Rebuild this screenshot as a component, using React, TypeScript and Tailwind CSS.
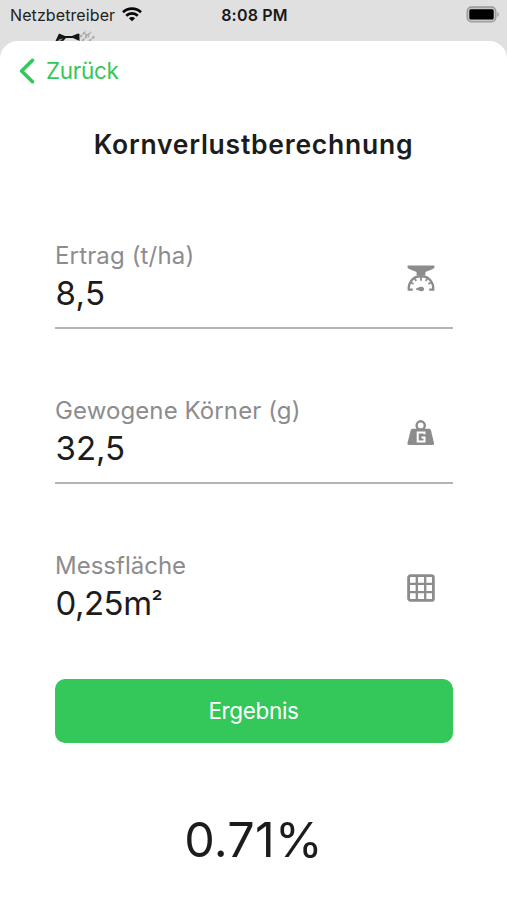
import type { ReactNode } from 'react';

interface FieldProps {
  label: string;
  value: ReactNode;
  icon: ReactNode;
  labelClass: string;
  valueClass: string;
  underline?: boolean;
}

const WifiIcon = () => (
  <svg width="20" height="15" viewBox="0 0 20 15" fill="none" stroke="#080808" strokeWidth="2.7">
    <path d="M1 5.2C6 .5 14 .5 19 5.2" />
    <path d="M4.2 8.7c3.3-3.1 8.3-3.1 11.6 0" />
    <path d="M10 14.3 6.9 11.3c1.8-1.6 4.4-1.6 6.2 0z" fill="#080808" stroke="none" />
  </svg>
);

const BatteryIcon = () => (
  <svg width="34" height="17" viewBox="0 0 34 17">
    <rect x="1.2" y="1" width="28.6" height="14.8" rx="4.4" fill="#c6c6c6" stroke="#969696" strokeWidth="1.3" />
    <rect x="3.3" y="3.2" width="24.4" height="10.2" rx="1.5" fill="#000" />
    <path d="M31.3 6v4.8c2-.7 2-4.1 0-4.8z" fill="#a0a0a0" />
  </svg>
);

const ScaleIcon = () => (
  <svg width="28" height="27" viewBox="0 0 28 27" fill="#8c8c8e">
    <path d="M1.5.5h25c.8 0 1 .4 1 1 0 1.4-.6 2-1.6 2.4L18.4 7v3.4H9.6V7L2.1 3.9C1.1 3.5.5 2.9.5 1.5c0-.6.2-1 1-1z" />
    <path d="M5.8 24.6H1.8C1.3 16.7 6.5 11.3 14 11.3s12.7 5.4 12.2 13.3h-4" fill="none" stroke="#8c8c8e" strokeWidth="2.4" />
    <path d="M14 11v4.8M7.3 12.6l1.9 3.4M20.7 12.6l-1.9 3.4M3.6 17.2l3 1.8M24.4 17.2l-3 1.8" fill="none" stroke="#8c8c8e" strokeWidth="1.8" />
    <path d="M9 23.6l3.7-1.7c3-.7 4.3.4 4.3 2s-1.2 2.8-3.8 2l-4.2-1.3z" />
  </svg>
);

const WeightIcon = () => (
  <svg width="28" height="26" viewBox="0 0 28 26" fill="#8c8c8e">
    <circle cx="13.7" cy="5.4" r="4.1" fill="none" stroke="#8c8c8e" strokeWidth="2.4" />
    <path d="M5.7 8.7h16.1c1.2 0 1.9.7 2.2 1.7L27 23c.3 1.3-.3 2-1.5 2H2.1C.8 25 .2 24.3.5 23l3.1-12.6c.3-1 1-1.7 2.1-1.7z" />
    <path d="M17.5 14.3v-1.7h-6.8v9h6.8v-4h-3" fill="none" stroke="#fff" strokeWidth="2" />
  </svg>
);

const GridIcon = () => (
  <svg width="28" height="28" viewBox="0 0 28 28" fill="none" stroke="#8c8c8e" strokeWidth="2.8">
    <rect x="1.6" y="1.6" width="24.8" height="24.8" rx="2" />
    <path d="M9.8 1v26M18.2 1v26M1 9.8h26M1 18.2h26" strokeWidth="2.3" />
  </svg>
);

const Field = ({ label, value, icon, labelClass, valueClass, underline }: FieldProps) => (
  <div
    className={`flex h-[89px] items-start justify-between pr-[18px] ${
      underline ? 'border-b-2 border-[#b4b4b6]' : ''
    }`}
  >
    <div className="pt-px">
      <div className={`h-[29px] whitespace-nowrap pl-[0.5px] text-[24px] leading-[30px] text-[#8c8c8e] ${labelClass}`}>{label}</div>
      <div className={`h-[46px] whitespace-nowrap pl-px text-[33px] leading-[46px] text-[#1c1c1c] ${valueClass}`}>{value}</div>
    </div>
    <div className="flex h-[76px] items-center">{icon}</div>
  </div>
);

const App = () => {
  return (
    <div className="flex h-[900px] w-[507px] flex-col overflow-hidden bg-[#e0e0e0] font-['Inter',sans-serif]">
      {/* Status bar */}
      <div className="grid h-[29px] shrink-0 grid-cols-3 items-center pl-[10px] pr-[7px]">
        <div className="flex items-center gap-[7px]">
          <span className="whitespace-nowrap pt-px text-[16px] tracking-[0.1px] text-[#222]">Netzbetreiber</span>
          <WifiIcon />
        </div>
        <span className="pr-px pt-px text-center text-[16px] font-semibold tracking-[0.2px] text-[#181818]">8:08 PM</span>
        <div className="flex justify-end">
          <BatteryIcon />
        </div>
      </div>

      {/* Edge of the screen behind the sheet */}
      <div className="h-3 shrink-0 pl-[54px]">
        <svg width="44" height="12" viewBox="0 0 44 12">
          <path d="M1.500 12 5 4.500l6 2.500h7l6-2.500 1.500.5v7L19 9h-7l-3 3z" fill="#151515" />
          <path d="M5.500 10l3.500-.5-2.500 2.500h-3z" fill="#8a8a8a" />
          <path d="M26 8l6-6M28 12l9-9M35 12l6-5M31 5l4 3" stroke="#a8a8a8" strokeWidth="1.8" strokeDasharray="3 1" fill="none" />
        </svg>
      </div>

      {/* Sheet */}
      <div className="flex-1 rounded-t-[18px] bg-white">
        <div className="flex h-[60px] items-center gap-[11px] pl-[19px] text-[#34c759]">
          <svg width="16" height="26" viewBox="0 0 16 26" fill="none" stroke="currentColor" strokeWidth="3.6" strokeLinecap="round" strokeLinejoin="round">
            <path d="M13.5 2.3 2.6 13l10.9 10.7" />
          </svg>
          <span className="text-[22.5px] tracking-[-0.3px]">Zurück</span>
        </div>

        <h1 className="mt-[23px] h-10 text-center text-[26.5px] font-semibold leading-10 tracking-[0.75px] text-[#1c1c1c]">
          Kornverlustberechnung
        </h1>

        <div className="mt-[76px] flex flex-col gap-[66px] px-[54.5px]">
          <Field label="Ertrag (t/ha)" value="8,5" icon={<ScaleIcon />} labelClass="tracking-[0.15px]" valueClass="tracking-[0.4px]" underline />
          <Field label="Gewogene Körner (g)" value="32,5" icon={<WeightIcon />} labelClass="tracking-[0.1px]" valueClass="tracking-[0px]" underline />
          <Field
            label="Messfläche"
            value={<>0,25m<span className="align-[4px] text-[25px] leading-none">²</span></>}
            icon={<GridIcon />}
            labelClass="tracking-[0px]"
            valueClass="tracking-[-0.5px]"
          />
        </div>

        <div className="mt-10 px-[54.5px]">
          <button className="h-[64px] w-full rounded-[10px] bg-[#34c759] text-[22.5px] tracking-[-0.35px] text-white">Ergebnis</button>
        </div>

        <div className="mt-[67px] text-center text-[48.5px] leading-[60px] tracking-[0.2px] text-[#1c1c1c]">0.71%</div>
      </div>
    </div>
  );
};

export default App;
